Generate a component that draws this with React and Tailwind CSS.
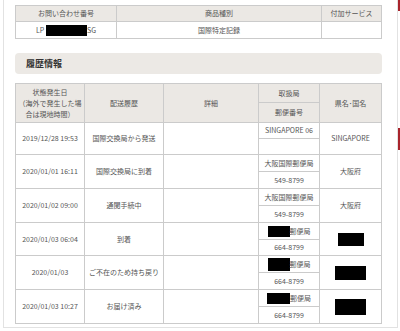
import React from 'react';

const rows = [
  { date: '2019/12/28 19:53', status: '国際交換局から発送', office: 'SINGAPORE 06', zip: '', pref: 'SINGAPORE' },
  { date: '2020/01/01 16:11', status: '国際交換局に到着', office: '大阪国際郵便局', zip: '549-8799', pref: '大阪府' },
  { date: '2020/01/02 09:00', status: '通関手続中', office: '大阪国際郵便局', zip: '549-8799', pref: '大阪府' },
  { date: '2020/01/03 06:04', status: '到着', hidden: true, box: 'w-[22px] h-[11px]', prefBox: 'w-[26px] h-[13px]', zip: '664-8799' },
  { date: '2020/01/03', status: 'ご不在のため持ち戻り', hidden: true, box: 'w-[22px] h-[13px]', prefBox: 'w-[31px] h-[14px]', zip: '664-8799' },
  { date: '2020/01/03 10:27', status: 'お届け済み', hidden: true, box: 'w-[23px] h-[11px]', prefBox: 'w-[31px] h-[16px]', zip: '664-8799' },
];

const cell = 'border-r border-b border-[#cbcbcb] flex items-center justify-center text-center';
const head = `${cell} bg-[#ebe8e4]`;

export default function App() {
  return (
    <div className="w-[400px] h-[331px] bg-white flex overflow-hidden font-['Noto_Sans_CJK_JP',sans-serif] text-[7px] text-[#555]">
      <div className="w-[3px] shrink-0" />

      <div className="w-[395px] h-[328px] shrink-0 border-l border-r border-b border-[#e2e2e2] pl-[11px] pt-[5px]">
        {/* 基本情報 */}
        <div className="w-[367px] grid grid-cols-[101px_205px_60px] grid-rows-[16px_17px] border-t border-l border-[#cbcbcb]">
          <div className={head}>お問い合わせ番号</div>
          <div className={head}>商品種別</div>
          <div className={head}>付加サービス</div>
          <div className={cell}>
            <span>LP</span>
            <span className="inline-block w-[41px] h-[11px] bg-black ml-[2px]" />
            <span>SG</span>
          </div>
          <div className={cell}>国際特定記録</div>
          <div className={cell} />
        </div>

        {/* 履歴情報 */}
        <div className="w-[367px] h-[21px] mt-[14px] rounded-[4px] bg-[#ece9e5] flex items-center pl-[11px]">
          <span className="text-[9px] font-bold text-[#333]">履歴情報</span>
        </div>

        <div className="w-[367px] mt-[9px] grid grid-cols-[69px_79px_95px_61px_62px] grid-rows-[19px_20px_16px_16px_17px_17px_17px_17px_17px_16px_17px_17px_17px_17px] border-t border-l border-[#cbcbcb]">
          <div className={`${head} row-span-2 leading-[11px]`}>
            状態発生日<br />（海外で発生した場<br />合は現地時間）
          </div>
          <div className={`${head} row-span-2`}>配送履歴</div>
          <div className={`${head} row-span-2`}>詳細</div>
          <div className={head}>取扱局</div>
          <div className={`${head} row-span-2`}>県名･国名</div>
          <div className={head}>郵便番号</div>

          {rows.map((r, i) => (
            <React.Fragment key={i}>
              <div className={`${cell} row-span-2`}>{r.date}</div>
              <div className={`${cell} row-span-2`}>{r.status}</div>
              <div className={`${cell} row-span-2`} />
              <div className={cell}>
                {r.hidden ? (
                  <>
                    <span className={`inline-block bg-black ${r.box}`} />
                    <span>郵便局</span>
                  </>
                ) : (
                  r.office
                )}
              </div>
              <div className={`${cell} row-span-2`}>
                {r.hidden ? <span className={`inline-block bg-black ${r.prefBox}`} /> : r.pref}
              </div>
              <div className={cell}>{r.zip}</div>
            </React.Fragment>
          ))}
        </div>
      </div>

      <div className="w-[2px] shrink-0 flex flex-col">
        <div className="h-[11px] bg-[#a8242c]" />
        <div className="h-[22px] mt-[117px] bg-[#a8242c]" />
      </div>
    </div>
  );
}
